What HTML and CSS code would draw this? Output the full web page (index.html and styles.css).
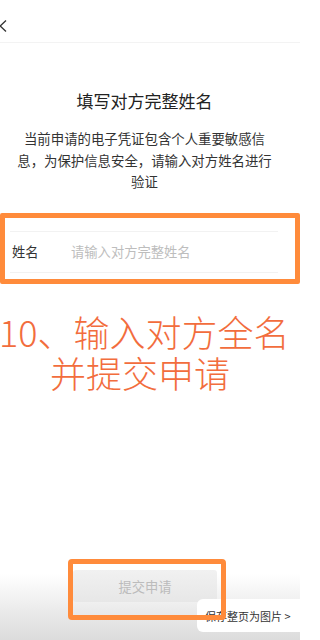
FILE: index.html
```html
<!DOCTYPE html>
<html lang="zh-CN">
<head>
<meta charset="utf-8">
<link rel="stylesheet" href="styles.css">
</head>
<body>
<div class="page">
  <header class="topbar">
    <svg class="back" width="9" height="14" viewBox="0 0 9 14"><path d="M7 1.5 L1.2 7 L7 12.5" fill="none" stroke="#333" stroke-width="1.3"/></svg>
  </header>
  <main class="content">
    <h1 class="title">填写对方完整姓名</h1>
    <p class="desc">当前申请的电子凭证包含个人重要敏感信息，为保护信息安全，请输入对方姓名进行验证</p>
    <div class="field">
      <span class="label">姓名</span>
      <span class="placeholder">请输入对方完整姓名</span>
    </div>
  </main>
  <footer class="bottom">
    <div class="submit">提交申请</div>
  </footer>
  <div class="save-tab">保存整页为图片 &gt;</div>
  <div class="note">
    <div class="note-line1">10、输入对方全名</div>
    <div class="note-line2">并提交申请</div>
  </div>
  <div class="hl hl-field"></div>
  <div class="hl hl-btn"></div>
</div>
</body>
</html>
```
FILE: styles.css
```css
html, body {
  margin: 0;
  padding: 0;
  background: #fff;
}
body {
  font-family: "Noto Sans CJK SC", "Noto Sans", sans-serif;
  color: #333;
}
.page {
  position: relative;
  width: 300px;
  height: 640px;
  overflow: hidden;
  display: flex;
  flex-direction: column;
}
.topbar {
  height: 43px;
  border-bottom: 1px solid #f3f3f3;
  display: flex;
  align-items: flex-start;
  padding-top: 19px;
  box-sizing: border-box;
}
.back {
  margin-left: -1px;
}
.content {
  flex: 1;
  display: flex;
  flex-direction: column;
  align-items: flex-start;
}
.title {
  margin: 46px 0 0 0;
  width: 289px;
  font-size: 17px;
  line-height: 24px;
  font-weight: normal;
  color: #222;
  text-align: center;
}
.desc {
  margin: 15px 0 0 13.5px;
  width: 262px;
  font-size: 13.4px;
  line-height: 21.5px;
  text-align: center;
  color: #333;
}
.field {
  margin: 38px 0 0 10px;
  width: 268px;
  height: 40px;
  border-top: 1px solid #f2f2f2;
  border-bottom: 1px solid #f2f2f2;
  display: flex;
  align-items: center;
  font-size: 13.3px;
}
.label {
  width: 59px;
  padding-left: 2px;
  color: #333;
}
.placeholder {
  color: #bdbdbd;
}
.bottom {
  height: 75px;
  background: linear-gradient(#fff 0%, #fff 12%, #ebebeb 60%, #dcdcdc 100%);
  display: flex;
  justify-content: flex-start;
  padding-left: 73px;
  padding-top: 5px;
  box-sizing: border-box;
}
.submit {
  width: 144px;
  height: 32px;
  border-radius: 3px;
  background: linear-gradient(#f1f1f1, #e7e7e7);
  color: #bcbcbc;
  font-size: 13.3px;
  display: flex;
  align-items: center;
  justify-content: center;
}
.save-tab {
  position: absolute;
  left: 197px;
  top: 599px;
  width: 110px;
  height: 33px;
  background: #fff;
  border-radius: 6px;
  font-size: 11px;
  color: #333;
  display: flex;
  align-items: center;
  padding-left: 8px;
  box-sizing: border-box;
}
.note {
  position: absolute;
  left: 0;
  top: 311px;
  font-size: 36px;
  line-height: 41px;
  font-weight: 300;
  color: #f26d3d;
  white-space: nowrap;
}
.note-line1 {
  margin-left: -1px;
}
.note-line2 {
  padding-left: 50px;
}
.hl {
  position: absolute;
  border: 5px solid #ff8b3b;
  box-sizing: border-box;
}
.hl-field {
  left: 0;
  top: 213px;
  width: 300px;
  height: 71px;
  border-radius: 2px;
}
.hl-btn {
  left: 68px;
  top: 559px;
  width: 158px;
  height: 61px;
  border-radius: 4px;
}
```
